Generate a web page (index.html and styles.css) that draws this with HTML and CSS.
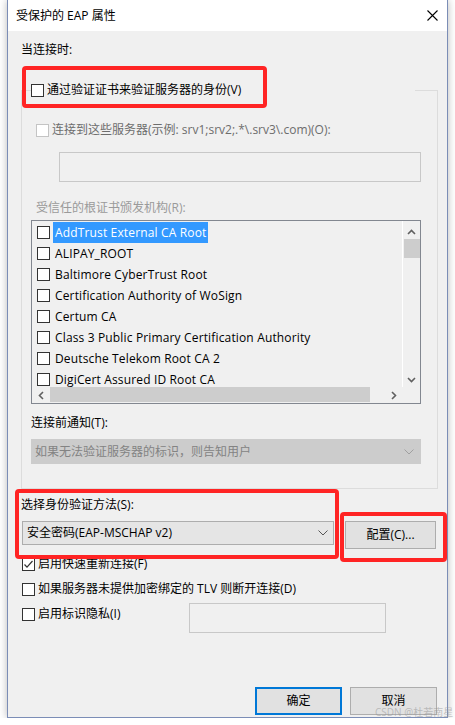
FILE: index.html
```html
<!DOCTYPE html>
<html lang="zh-CN">
<head>
<meta charset="utf-8">
<title>受保护的 EAP 属性</title>
<link rel="stylesheet" href="styles.css">
</head>
<body>
<div class="win">
  <div class="titlebar">
    <span class="title">受保护的 EAP 属性</span>
    <svg class="close" width="11" height="11" viewBox="0 0 11 11"><path d="M0.5 0.5 L10.5 10.5 M10.5 0.5 L0.5 10.5" stroke="#000" stroke-width="1.1" fill="none"/></svg>
  </div>
  <div class="body">
    <div class="lbl">当连接时:</div>
    <fieldset class="group">
      <legend class="legend"><span class="cb"></span><span>通过验证证书来验证服务器的身份(V)</span></legend>
      <div class="srvrow dis-a"><span class="cb cb-dis"></span><span>连接到这些服务器(示例: srv1;srv2;.*\.srv3\.com)(O):</span></div>
      <div class="textbox tb-servers"></div>
      <div class="trust dis-b">受信任的根证书颁发机构(R):</div>
      <div class="listbox">
        <div class="lb-items">
          <div class="item"><span class="cb"></span><span class="itext sel">AddTrust External CA Root</span></div>
          <div class="item"><span class="cb"></span><span class="itext">ALIPAY_ROOT</span></div>
          <div class="item"><span class="cb"></span><span class="itext">Baltimore CyberTrust Root</span></div>
          <div class="item"><span class="cb"></span><span class="itext">Certification Authority of WoSign</span></div>
          <div class="item"><span class="cb"></span><span class="itext">Certum CA</span></div>
          <div class="item"><span class="cb"></span><span class="itext">Class 3 Public Primary Certification Authority</span></div>
          <div class="item"><span class="cb"></span><span class="itext">Deutsche Telekom Root CA 2</span></div>
          <div class="item"><span class="cb"></span><span class="itext">DigiCert Assured ID Root CA</span></div>
        </div>
        <div class="vscroll">
          <svg class="arr-up" width="9" height="6" viewBox="0 0 9 6"><path d="M1 5 L4.5 1.5 L8 5" stroke="#606060" stroke-width="1.6" fill="none"/></svg>
          <div class="vthumb"></div>
          <svg class="arr-down" width="9" height="6" viewBox="0 0 9 6"><path d="M1 1 L4.5 4.5 L8 1" stroke="#606060" stroke-width="1.6" fill="none"/></svg>
        </div>
        <div class="hscroll">
          <svg class="arr-left" width="6" height="9" viewBox="0 0 6 9"><path d="M5 1 L1.5 4.5 L5 8" stroke="#606060" stroke-width="1.6" fill="none"/></svg>
          <div class="hthumb"></div>
          <svg class="arr-right" width="6" height="9" viewBox="0 0 6 9"><path d="M1 1 L4.5 4.5 L1 8" stroke="#606060" stroke-width="1.6" fill="none"/></svg>
        </div>
        <div class="corner"></div>
      </div>
      <div class="notify">连接前通知(T):</div>
      <div class="select select-dis">
        <span>如果无法验证服务器的标识，则告知用户</span>
        <svg width="10" height="6" viewBox="0 0 10 6"><path d="M0.5 0.5 L5 5 L9.5 0.5" stroke="#a0a0a0" stroke-width="1" fill="none"/></svg>
      </div>
    </fieldset>
    <div class="method">选择身份验证方法(S):</div>
    <div class="method-row">
      <div class="select select-en">
        <span>安全密码(EAP-MSCHAP v2)</span>
        <svg width="10" height="6" viewBox="0 0 10 6"><path d="M0.5 0.5 L5 5 L9.5 0.5" stroke="#555" stroke-width="1" fill="none"/></svg>
      </div>
      <div class="btn btn-cfg">配置(C)...</div>
    </div>
    <div class="opt opt-first"><span class="cb cb-on"><svg width="11" height="11" viewBox="0 0 11 11"><path d="M1.5 5.5 L4 8.2 L9.5 2" stroke="#333" stroke-width="1.2" fill="none"/></svg></span><span>启用快速重新连接(F)</span></div>
    <div class="opt"><span class="cb"></span><span>如果服务器未提供加密绑定的 TLV 则断开连接(D)</span></div>
    <div class="opt opt-priv">
      <span class="priv-label"><span class="cb"></span><span>启用标识隐私(I)</span></span>
      <div class="textbox tb-priv"></div>
    </div>
    <div class="btnrow">
      <div class="btn btn-ok">确定</div>
      <div class="btn">取消</div>
    </div>
  </div>
  <div class="mark m1"></div>
  <div class="mark m2"></div>
  <div class="mark m3"></div>
  <div class="wm">CSDN @杜若南星</div>
</div>
</body>
</html>
```
FILE: styles.css
```css
* { box-sizing: border-box; }
html, body { margin: 0; padding: 0; background: #fff; }
body {
  font-family: "Open Sans", "Noto Sans CJK SC", sans-serif;
  font-size: 12px;
  line-height: 16px;
  color: #000;
}
.win {
  position: relative;
  margin-left: 7px;
  width: 441px;
  height: 718px;
  border: 1px solid #7b8db6;
  border-top: none;
  background: #f0f0f0;
  box-shadow: 0 0 8px rgba(0, 0, 0, 0.28);
}
.titlebar {
  height: 31px;
  background: #fff;
  display: flex;
  align-items: center;
  justify-content: space-between;
  padding: 0 9px 0 8px;
}
.close { display: block; }
.body { padding: 11px 0 0 13px; }
.lbl { height: 16px; }

.cb {
  display: inline-block;
  width: 13px;
  height: 13px;
  border: 1px solid #333;
  background: #fff;
  flex: none;
  margin-right: 3px;
}
.cb-dis { border-color: #c4c4c4; }
.cb-on svg { display: block; margin: 0; }

.group {
  margin: 24px 0 0 0;
  width: 417px;
  padding: 0 0 24px 0;
  border: 1px solid #dcdcdc;
  min-width: 0;
}
.legend {
  margin-left: 9px;
  padding: 0;
  width: 384px;
  height: 16px;
  display: flex;
  align-items: center;
  background: #f0f0f0;
}
.srvrow {
  margin: 24px 0 0 14px;
  display: flex;
  align-items: center;
  height: 16px;
}
.dis-a { color: #6d6d6d; }
.dis-b { color: #9a9a9a; }
.textbox {
  border: 1px solid #c8c8c8;
  background: #f0f0f0;
}
.tb-servers { margin: 14px 0 0 37px; width: 362px; height: 30px; }
.trust { margin: 18px 0 0 14px; height: 16px; }

.listbox {
  margin: 4px 0 0 9px;
  width: 390px;
  height: 184px;
  border: 1px solid #828790;
  display: grid;
  grid-template-columns: 1fr 17px;
  grid-template-rows: 1fr 16px;
  overflow: hidden;
}
.lb-items {
  padding-top: 1px;
  overflow: hidden;
  border-right: 1px solid #fff;
}
.item {
  height: 21px;
  display: flex;
  align-items: center;
  padding-left: 5px;
}
.item .cb { margin-right: 3px; }
.itext { line-height: 21px; padding: 0 2px; white-space: nowrap; letter-spacing: 0.15px; }
.sel { background: #3399ff; color: #fff; }
.vscroll {
  display: flex;
  flex-direction: column;
  align-items: center;
  background: #f0f0f0;
}
.arr-up { margin-top: 8px; display: block; }
.vthumb { width: 16px; height: 19px; background: #cdcdcd; margin-top: 4px; margin-left: 1px; }
.arr-down { margin-top: auto; margin-bottom: 4px; display: block; }
.hscroll {
  display: flex;
  align-items: center;
  background: #f0f0f0;
}
.arr-left { margin-left: 6px; display: block; }
.hthumb { width: 320px; height: 15px; background: #cdcdcd; margin-left: 6px; align-self: flex-start; }
.arr-right { margin-left: 21px; display: block; }
.corner { background: #f0f0f0; }

.notify { margin: 11px 0 0 9px; height: 16px; }
.select {
  display: flex;
  align-items: center;
  justify-content: space-between;
}
.select svg { display: block; }
.select-dis {
  margin: 8px 0 0 9px;
  width: 390px;
  height: 25px;
  background: #cccccc;
  border: 1px solid #cccccc;
  color: #838383;
  padding: 0 6px 0 3px;
}
.method { margin-top: 8px; height: 16px; }
.method-row {
  margin: 8px 0 0 1px;
  display: flex;
  align-items: flex-start;
  gap: 11px;
}
.select-en {
  width: 312px;
  height: 24px;
  background: #e5e5e5;
  border: 1px solid #adadad;
  padding: 0 5px 0 4px;
}
.btn {
  width: 87px;
  height: 28px;
  background: #e1e1e1;
  border: 1px solid #adadad;
  display: flex;
  align-items: center;
  justify-content: center;
}
.btn-cfg { width: 91px; }
.opt {
  display: flex;
  align-items: center;
  height: 16px;
  margin: 9px 0 0 1px;
}
.opt-first { margin-top: 7px; }
.opt-priv { align-items: flex-start; }
.priv-label { display: flex; align-items: center; width: 167px; height: 16px; }
.tb-priv { width: 197px; height: 30px; margin-top: -3px; }
.btnrow {
  margin-top: 65px;
  display: flex;
  justify-content: flex-end;
  gap: 8px;
  padding-right: 10px;
}
.btn-ok { border: 2px solid #0078d7; }

.mark {
  position: absolute;
  border: 4px solid #ff2424;
  border-radius: 4px;
}
.m1 { left: 14px; top: 66px; width: 245px; height: 42px; }
.m2 { left: 7px; top: 489px; width: 324px; height: 70px; }
.m3 { left: 332px; top: 512px; width: 107px; height: 50px; }
.wm {
  position: absolute;
  left: 367px;
  top: 706px;
  font-size: 10px;
  line-height: 13px;
  color: rgba(150, 150, 150, 0.55);
  white-space: nowrap;
}
```
